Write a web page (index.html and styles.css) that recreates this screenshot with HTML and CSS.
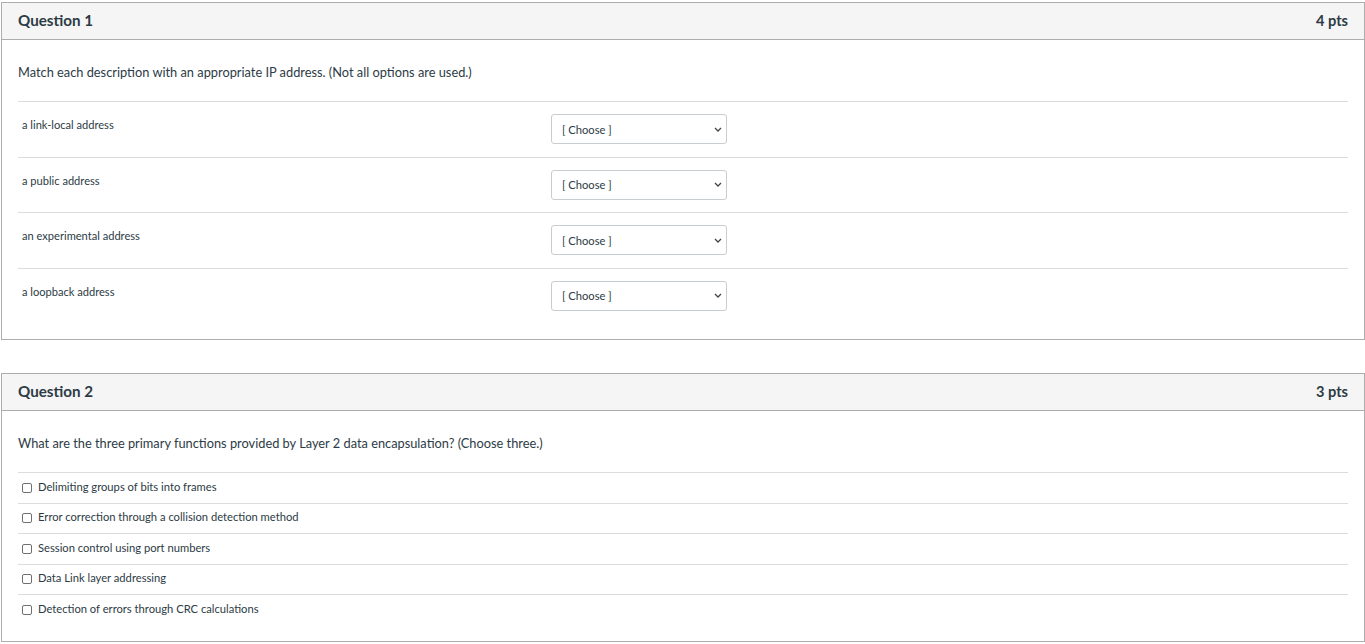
FILE: index.html
```html
<!DOCTYPE html>
<html lang="en">
<head>
    <meta charset="UTF-8">
    <title>Quiz</title>
    <link rel="stylesheet" href="styles.css">
</head>
<body>
    <div class="question">
        <div class="question-header">
            <span class="question-name">Question 1</span>
            <span class="question-points">4 pts</span>
        </div>
        <div class="question-body">
            <div class="question-text">Match each description with an appropriate IP address. (Not all options are used.)</div>

            <div class="match-row">
                <div class="match-label">a link-local address</div>
                <div class="select">[ Choose ]
                    <svg class="chevron" width="8" height="5" viewBox="0 0 8 5"><path d="M1 1l3 3 3-3" fill="none" stroke="#444" stroke-width="1.3"/></svg>
                </div>
            </div>
            <div class="match-row">
                <div class="match-label">a public address</div>
                <div class="select">[ Choose ]
                    <svg class="chevron" width="8" height="5" viewBox="0 0 8 5"><path d="M1 1l3 3 3-3" fill="none" stroke="#444" stroke-width="1.3"/></svg>
                </div>
            </div>
            <div class="match-row">
                <div class="match-label">an experimental address</div>
                <div class="select">[ Choose ]
                    <svg class="chevron" width="8" height="5" viewBox="0 0 8 5"><path d="M1 1l3 3 3-3" fill="none" stroke="#444" stroke-width="1.3"/></svg>
                </div>
            </div>
            <div class="match-row">
                <div class="match-label">a loopback address</div>
                <div class="select">[ Choose ]
                    <svg class="chevron" width="8" height="5" viewBox="0 0 8 5"><path d="M1 1l3 3 3-3" fill="none" stroke="#444" stroke-width="1.3"/></svg>
                </div>
            </div>
        </div>
    </div>

    <div class="question">
        <div class="question-header">
            <span class="question-name">Question 2</span>
            <span class="question-points">3 pts</span>
        </div>
        <div class="question-body">
            <div class="question-text">What are the three primary functions provided by Layer 2 data encapsulation? (Choose three.)</div>

            <label class="answer"><span class="check"></span>Delimiting groups of bits into frames</label>
            <label class="answer"><span class="check"></span>Error correction through a collision detection method</label>
            <label class="answer"><span class="check"></span>Session control using port numbers</label>
            <label class="answer"><span class="check"></span>Data Link layer addressing</label>
            <label class="answer"><span class="check"></span>Detection of errors through CRC calculations</label>
        </div>
    </div>
</body>
</html>
```

FILE: styles.css
```css
* {
    margin: 0;
    padding: 0;
    box-sizing: border-box;
}

body {
    background: #fff;
    color: #2d3b45;
    font-family: Lato, 'Liberation Sans', sans-serif;
    padding: 2px 0 0 1px;
}

.question {
    width: 1364px;
    border: 1px solid #adadad;
    margin-bottom: 33px;
}

.question-header {
    height: 37px;
    padding: 0 16px 2px;
    display: flex;
    align-items: center;
    justify-content: space-between;
    background: #f5f5f5;
    border-bottom: 1px solid #adadad;
    font-size: 15.2px;
    font-weight: bold;
}

.question-points {
    font-size: 14.6px;
}

.question-body {
    padding: 0 16px 16px;
}

.question-text {
    font-size: 12.8px;
    line-height: 18px;
    padding: 23px 0 20px;
}

.match-row {
    display: flex;
    align-items: flex-start;
    height: 55.5px;
    border-top: 1px solid #dcdcdc;
}

.match-label {
    width: 533px;
    padding: 15px 0 0 4px;
    font-size: 11.1px;
    line-height: 16px;
}

.select {
    margin-top: 12px;
    width: 176px;
    height: 30px;
    border: 1px solid #c7cdd1;
    border-radius: 3px;
    padding: 0 10px;
    display: flex;
    align-items: center;
    justify-content: space-between;
    font-size: 11.2px;
}

.chevron {
    margin-right: -6px;
}

.answer {
    display: flex;
    align-items: center;
    height: 30.5px;
    padding: 0 0 3px 4px;
    border-top: 1px solid #dcdcdc;
    font-size: 11.2px;
}

.check {
    width: 10px;
    height: 10px;
    border: 1px solid #6f6f6f;
    border-radius: 2px;
    margin: 3px 6px 0 0;
}
```
